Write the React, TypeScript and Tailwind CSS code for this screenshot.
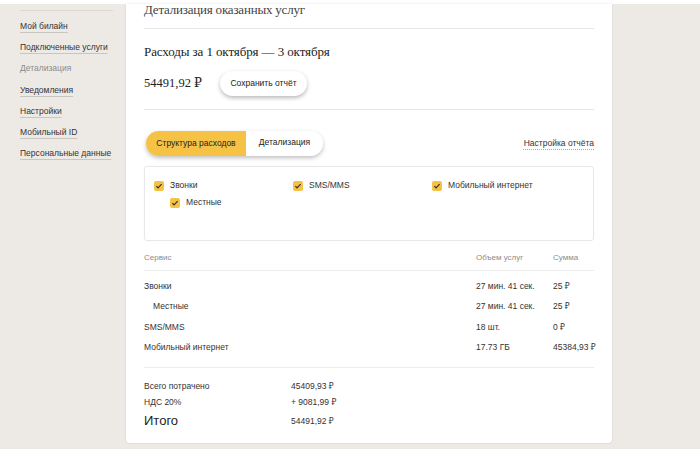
import React from "react";

const sans = { fontFamily: '"Liberation Sans", "Noto Sans", sans-serif' };
const serif = { fontFamily: '"Liberation Serif", "DejaVu Serif", serif' };

function Check() {
  return (
    <span className="inline-flex h-[10px] w-[10px] shrink-0 items-center justify-center rounded-[2px] bg-[#f5c245]">
      <svg width="8" height="8" viewBox="0 0 8 8">
        <path d="M1.3 4.1 L3.1 5.8 L6.6 2.2" fill="none" stroke="#333" strokeWidth="1.2" />
      </svg>
    </span>
  );
}

const nav = [
  { t: "Мой билайн", a: true },
  { t: "Подключенные услуги", a: true },
  { t: "Детализация", a: false },
  { t: "Уведомления", a: true },
  { t: "Настройки", a: true },
  { t: "Мобильный ID", a: true },
  { t: "Персональные данные", a: true },
];

const rows = [
  { s: "Звонки", v: "27 мин. 41 сек.", p: "25 ₽", i: false },
  { s: "Местные", v: "27 мин. 41 сек.", p: "25 ₽", i: true },
  { s: "SMS/MMS", v: "18 шт.", p: "0 ₽", i: false },
  { s: "Мобильный интернет", v: "17.73 ГБ", p: "45384,93 ₽", i: false },
];

export default function App() {
  return (
    <div className="h-[449px] w-[700px] overflow-hidden bg-[#edeae6] text-[#333]" style={sans}>
      <div className="h-[4px] bg-white" />
      <div className="flex">
        <aside className="w-[126px] shrink-0 pl-[20px] pr-[13px] pt-[6px]">
          <div className="h-px bg-[#dcd9d5]" />
          <ul className="mt-[4px] flex flex-col">
            {nav.map((n) => (
              <li key={n.t} className="flex h-[21.3px] items-center whitespace-nowrap">
                <span
                  className={
                    n.a
                      ? "text-[8.5px] leading-[12px] text-[#333] underline decoration-[#c9c6c2] underline-offset-[3px]"
                      : "text-[8.5px] leading-[12px] text-[#8a8a8a]"
                  }
                >
                  {n.t}
                </span>
              </li>
            ))}
          </ul>
        </aside>
        <main className="w-[486px] shrink-0 rounded-b-[4px] bg-white px-[18px] shadow-[0_0_2px_rgba(0,0,0,0.15)]">
          <div className="h-[26px] border-b border-[#e6e6e6]">
            <div className="-mt-[1px] text-[13px] leading-[14px] tracking-[-0.2px] text-[#444]" style={serif}>
              Детализация оказанных услуг
            </div>
          </div>
          <div className="pt-[13px] text-[13px] leading-[20px] tracking-[-0.1px] text-[#222]" style={serif}>
            Расходы за 1 октября — 3 октября
          </div>
          <div className="mt-[9px] flex h-[25px] items-center">
            <span className="w-[76px] text-[12.5px] text-[#222]" style={serif}>
              54491,92 ₽
            </span>
            <button className="h-[25px] w-[87px] rounded-full bg-white text-[8.5px] text-[#222] shadow-[0_2px_4px_rgba(0,0,0,0.28)]">
              Сохранить отчёт
            </button>
          </div>
          <div className="mt-[13px] border-b border-[#e6e6e6]" />
          <div className="mt-[21px] flex h-[25px] items-center justify-between">
            <div className="ml-[2px] flex h-[25px] rounded-full shadow-[0_2px_4px_rgba(0,0,0,0.25)]">
              <div className="flex w-[100px] items-center justify-center rounded-l-full bg-[#f5c245] text-[8.5px] text-[#222]">
                Структура расходов
              </div>
              <div className="flex w-[77px] items-center justify-center rounded-r-full bg-white pb-[3px] text-[8.5px] text-[#222]">
                Детализация
              </div>
            </div>
            <span className="text-[8.5px] text-[#333] underline decoration-dotted decoration-[#aaa] underline-offset-[3px]">
              Настройка отчёта
            </span>
          </div>
          <div className="mt-[10px] h-[75px] rounded-[3px] border border-[#e8e8e8] pl-[9px] pt-[13px] shadow-[0_0_2px_rgba(0,0,0,0.04)]">
            <div className="grid grid-cols-[139px_139px_1fr]">
              <div>
                <div className="flex h-[11px] items-center gap-[6px] text-[8.5px]">
                  <Check />
                  Звонки
                </div>
                <div className="ml-[16px] mt-[6px] flex h-[11px] items-center gap-[6px] text-[8.5px]">
                  <Check />
                  Местные
                </div>
              </div>
              <div className="flex h-[11px] items-center gap-[6px] text-[8.5px]">
                <Check />
                SMS/MMS
              </div>
              <div className="flex h-[11px] items-center gap-[6px] text-[8.5px]">
                <Check />
                Мобильный интернет
              </div>
            </div>
          </div>
          <div className="mt-[11px] grid h-[12px] grid-cols-[332px_77px_1fr] items-center text-[8px] text-[#8c8c8c]">
            <span>Сервис</span>
            <span>Объем услуг</span>
            <span>Сумма</span>
          </div>
          <div className="mt-[6px] border-b border-[#ececec]" />
          <div className="pt-[5px]">
            {rows.map((r) => (
              <div key={r.s} className="grid h-[20.5px] grid-cols-[332px_77px_1fr] items-center text-[8.5px] text-[#333]">
                <span className={r.i ? "pl-[9px]" : ""}>{r.s}</span>
                <span>{r.v}</span>
                <span className="whitespace-nowrap">{r.p}</span>
              </div>
            ))}
          </div>
          <div className="mt-[9px] border-b border-[#ececec]" />
          <div className="pt-[11px] pb-[12px]">
            <div className="grid h-[14px] grid-cols-[147px_1fr] items-center text-[8.5px]">
              <span>Всего потрачено</span>
              <span>45409,93 ₽</span>
            </div>
            <div className="grid h-[18px] grid-cols-[147px_1fr] items-center text-[8.5px]">
              <span>НДС 20%</span>
              <span>+ 9081,99 ₽</span>
            </div>
            <div className="grid h-[20px] grid-cols-[147px_1fr] items-center">
              <span className="text-[13px] text-[#222]">Итого</span>
              <span className="text-[8.5px]">54491,92 ₽</span>
            </div>
          </div>
        </main>
      </div>
    </div>
  );
}
